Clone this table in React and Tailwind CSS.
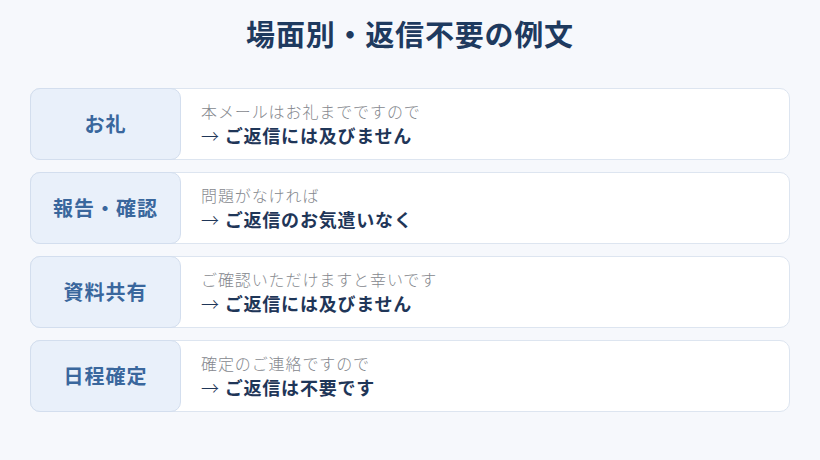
const rows = [
  { label: "お礼", sub: "本メールはお礼までですので", main: "ご返信には及びません" },
  { label: "報告・確認", sub: "問題がなければ", main: "ご返信のお気遣いなく" },
  { label: "資料共有", sub: "ご確認いただけますと幸いです", main: "ご返信には及びません" },
  { label: "日程確定", sub: "確定のご連絡ですので", main: "ご返信は不要です" },
];

const Row = ({ label, sub, main }) => (
  <div className="flex h-[72px] rounded-[10px] border border-[#dde5f0] bg-white">
    <div className="-my-px -ml-px flex w-[151px] shrink-0 items-center justify-center rounded-[10px] border border-[#d3deee] bg-[#e9f0fa] text-[20px] font-bold tracking-[1px] text-[#3a679d]">
      {label}
    </div>
    <div className="flex flex-col justify-center pl-[20px]">
      <div className="text-[16px] font-light leading-[22px] tracking-[0.9px] text-[#85888e]">{sub}</div>
      <div className="text-[18px] font-bold leading-[26px] tracking-[0.8px] text-[#1f3658]">
        <span className="font-light">→</span> {main}
      </div>
    </div>
  </div>
);

export default function App() {
  return (
    <div
      className="h-[460px] w-[820px] bg-[#f6f8fc] px-[30px] pt-[12px]"
      style={{ fontFamily: '"Noto Sans CJK JP", "Noto Sans", sans-serif' }}
    >
      <h1 className="text-center text-[29px] font-bold leading-[42px] tracking-[0.8px] text-[#1e3a5f]">
        場面別・返信不要の例文
      </h1>
      <div className="mt-[34px] flex flex-col gap-[12px]">
        {rows.map((r) => (
          <Row key={r.label} {...r} />
        ))}
      </div>
    </div>
  );
}
